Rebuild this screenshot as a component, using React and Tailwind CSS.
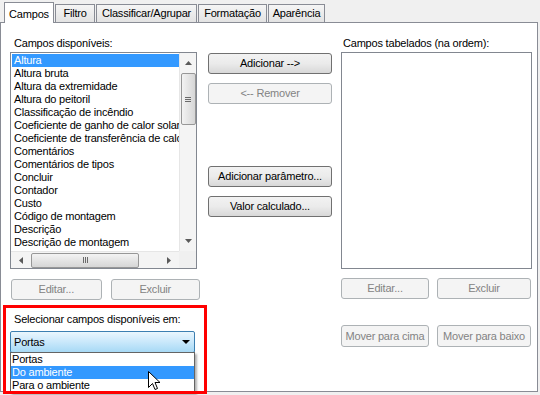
import React from "react";

const campos = [
  "Altura",
  "Altura bruta",
  "Altura da extremidade",
  "Altura do peitoril",
  "Classificação de incêndio",
  "Coeficiente de ganho de calor solar",
  "Coeficiente de transferência de calor",
  "Comentários",
  "Comentários de tipos",
  "Concluir",
  "Contador",
  "Custo",
  "Código de montagem",
  "Descrição",
  "Descrição de montagem",
];

const tabs = [
  { label: "Campos", w: "w-[50px]" },
  { label: "Filtro", w: "w-[40px]" },
  { label: "Classificar/Agrupar", w: "w-[101px]" },
  { label: "Formatação", w: "w-[69px]" },
  { label: "Aparência", w: "w-[57px]" },
];

function Button({ children, disabled, className = "" }) {
  return (
    <div
      className={
        "flex items-center justify-center rounded-[3px] border whitespace-nowrap " +
        (disabled
          ? "border-[#adb2b5] bg-[#f4f4f4] text-[#838383] "
          : "border-[#707070] bg-gradient-to-b from-[#f2f2f2] via-[#ebebeb] to-[#d8d8d8] text-black ") +
        className
      }
    >
      {children}
    </div>
  );
}

function ScrollArrow({ dir }) {
  const pts = {
    up: "0,4 7,4 3.5,0",
    down: "0,0 7,0 3.5,4",
    left: "4,0 4,7 0,3.5",
    right: "0,0 0,7 4,3.5",
  }[dir];
  const vertical = dir === "up" || dir === "down";
  return (
    <svg width={vertical ? 7 : 4} height={vertical ? 4 : 7}>
      <polygon points={pts} fill="#5a5a5a" />
    </svg>
  );
}

function ListBox() {
  return (
    <div className="flex h-[217px] w-[187px] flex-col border border-[#828790] bg-white">
      <div className="flex min-h-0 flex-1">
        <div className="flex-1 overflow-hidden pl-px pt-px">
          {campos.map((c, i) => (
            <div
              key={c}
              className={
                "h-[13px] overflow-hidden whitespace-nowrap pl-[2px] leading-[13px] " +
                (i === 0 ? "bg-[#3399ff] text-white" : "text-black")
              }
            >
              {c}
            </div>
          ))}
        </div>
        <div className="flex w-[17px] flex-col items-center border-l border-[#e6e6e6] bg-[#f4f4f4]">
          <div className="flex h-[20px] items-center justify-center">
            <ScrollArrow dir="up" />
          </div>
          <div className="flex h-[52px] w-[15px] items-center justify-center rounded-[2px] border border-[#979797] bg-gradient-to-r from-[#f3f3f3] to-[#d6d6d6]">
            <div className="flex flex-col gap-px">
              <div className="h-px w-[6px] bg-[#6a6a6a]" />
              <div className="h-px w-[6px] bg-[#6a6a6a]" />
              <div className="h-px w-[6px] bg-[#6a6a6a]" />
            </div>
          </div>
          <div className="flex-1" />
          <div className="flex h-[20px] items-center justify-center">
            <ScrollArrow dir="down" />
          </div>
        </div>
      </div>
      <div className="flex h-[17px]">
        <div className="flex flex-1 items-center border-t border-[#e6e6e6] bg-[#f4f4f4]">
          <div className="flex w-[20px] justify-center">
            <ScrollArrow dir="left" />
          </div>
          <div className="flex h-[15px] w-[108px] items-center justify-center rounded-[2px] border border-[#979797] bg-gradient-to-b from-[#f3f3f3] to-[#d6d6d6]">
            <div className="flex gap-px">
              <div className="h-[6px] w-px bg-[#6a6a6a]" />
              <div className="h-[6px] w-px bg-[#6a6a6a]" />
              <div className="h-[6px] w-px bg-[#6a6a6a]" />
            </div>
          </div>
          <div className="flex-1" />
          <div className="flex w-[20px] justify-center">
            <ScrollArrow dir="right" />
          </div>
        </div>
        <div className="w-[17px] bg-[#f0f0f0]" />
      </div>
    </div>
  );
}

export default function App() {
  return (
    <div className="relative h-[395px] w-[540px] overflow-hidden bg-[#f0f0f0] font-['Liberation_Sans',Arial,sans-serif] text-[11px] tracking-[-0.2px]">
      <div className="flex h-[22px] items-end pl-[4px]">
        {tabs.map((t, i) =>
          i === 0 ? (
            <div
              key={t.label}
              className={
                t.w +
                " relative z-10 -mb-px flex h-[21px] items-start justify-center border border-b-0 border-[#898c95] bg-white pt-[3px]"
              }
            >
              {t.label}
            </div>
          ) : (
            <div
              key={t.label}
              className={
                t.w +
                " ml-px flex h-[18px] items-center justify-center border border-b-0 border-[#898c95] bg-gradient-to-b from-[#f5f5f5] to-[#e3e3e3]"
              }
            >
              {t.label}
            </div>
          )
        )}
      </div>
      <div className="flex h-[370px] w-[538px] border border-[#898c95] bg-white pl-[9px] pt-[14px]">
        <div className="flex w-[190px] flex-col">
          <div className="h-[13px] pl-[4px] leading-[13px]">Campos disponíveis:</div>
          <div className="mt-[2px]">
            <ListBox />
          </div>
          <div className="mt-[10px] flex gap-[9px] pl-px">
            <Button disabled className="h-[21px] w-[91px]">
              Editar...
            </Button>
            <Button disabled className="h-[21px] w-[90px]">
              Excluir
            </Button>
          </div>
          <div className="mt-[13px] h-[13px] pl-[4px] leading-[13px]">
            Selecionar campos disponíveis em:
          </div>
          <div className="relative mt-[5px] w-[185px]">
            <div className="flex h-[22px] items-center justify-between rounded-[2px] border border-[#3c7fb1] bg-gradient-to-b from-[#eaf6fd] via-[#c9e8fb] to-[#a7d9f5] pl-[3px] pr-[4px]">
              <span>Portas</span>
              <svg width="8" height="4">
                <polygon points="0,0 8,0 4,4" fill="#000" />
              </svg>
            </div>
            <div className="absolute left-0 top-[21px] z-20 w-[185px] border border-[#646464] bg-white shadow-[2px_2px_2px_rgba(0,0,0,0.3)]">
              <div className="h-[13px] pl-[1px] leading-[13px]">Portas</div>
              <div className="h-[13px] bg-[#3399ff] pl-[1px] leading-[13px] text-white">
                Do ambiente
              </div>
              <div className="h-[13px] pl-[1px] leading-[13px]">Para o ambiente</div>
            </div>
          </div>
        </div>

        <div className="ml-[8px] flex w-[124px] flex-col pt-[16px]">
          <Button className="h-[21px]">Adicionar --&gt;</Button>
          <Button disabled className="mt-[9px] h-[21px]">
            &lt;-- Remover
          </Button>
          <Button className="mt-[62px] h-[21px]">Adicionar parâmetro...</Button>
          <Button className="mt-[9px] h-[21px]">Valor calculado...</Button>
        </div>

        <div className="ml-[9px] flex w-[191px] flex-col">
          <div className="h-[13px] pl-[2px] leading-[13px]">Campos tabelados (na ordem):</div>
          <div className="mt-[2px] h-[217px] w-[191px] border border-[#828790] bg-white" />
          <div className="mt-[9px] flex gap-[8px]">
            <Button disabled className="h-[21px] w-[88px]">
              Editar...
            </Button>
            <Button disabled className="h-[21px] w-[94px]">
              Excluir
            </Button>
          </div>
          <div className="mt-[26px] flex gap-[8px]">
            <Button disabled className="h-[22px] w-[88px]">
              Mover para cima
            </Button>
            <Button disabled className="h-[22px] w-[94px]">
              Mover para baixo
            </Button>
          </div>
        </div>
      </div>

      <div className="pointer-events-none absolute left-[3px] top-[305px] z-30 h-[89px] w-[204px] border-[3px] border-[#ff0000]" />

      <svg
        className="absolute left-[148px] top-[371px] z-40"
        width="13"
        height="20"
        viewBox="0 0 13 20"
      >
        <path
          d="M0.5 0.5 L0.5 16.5 L4.5 12.5 L7 18.5 L9.5 17.5 L7 11.5 L12 11.5 Z"
          fill="#fff"
          stroke="#000"
          strokeWidth="1"
        />
      </svg>
    </div>
  );
}
